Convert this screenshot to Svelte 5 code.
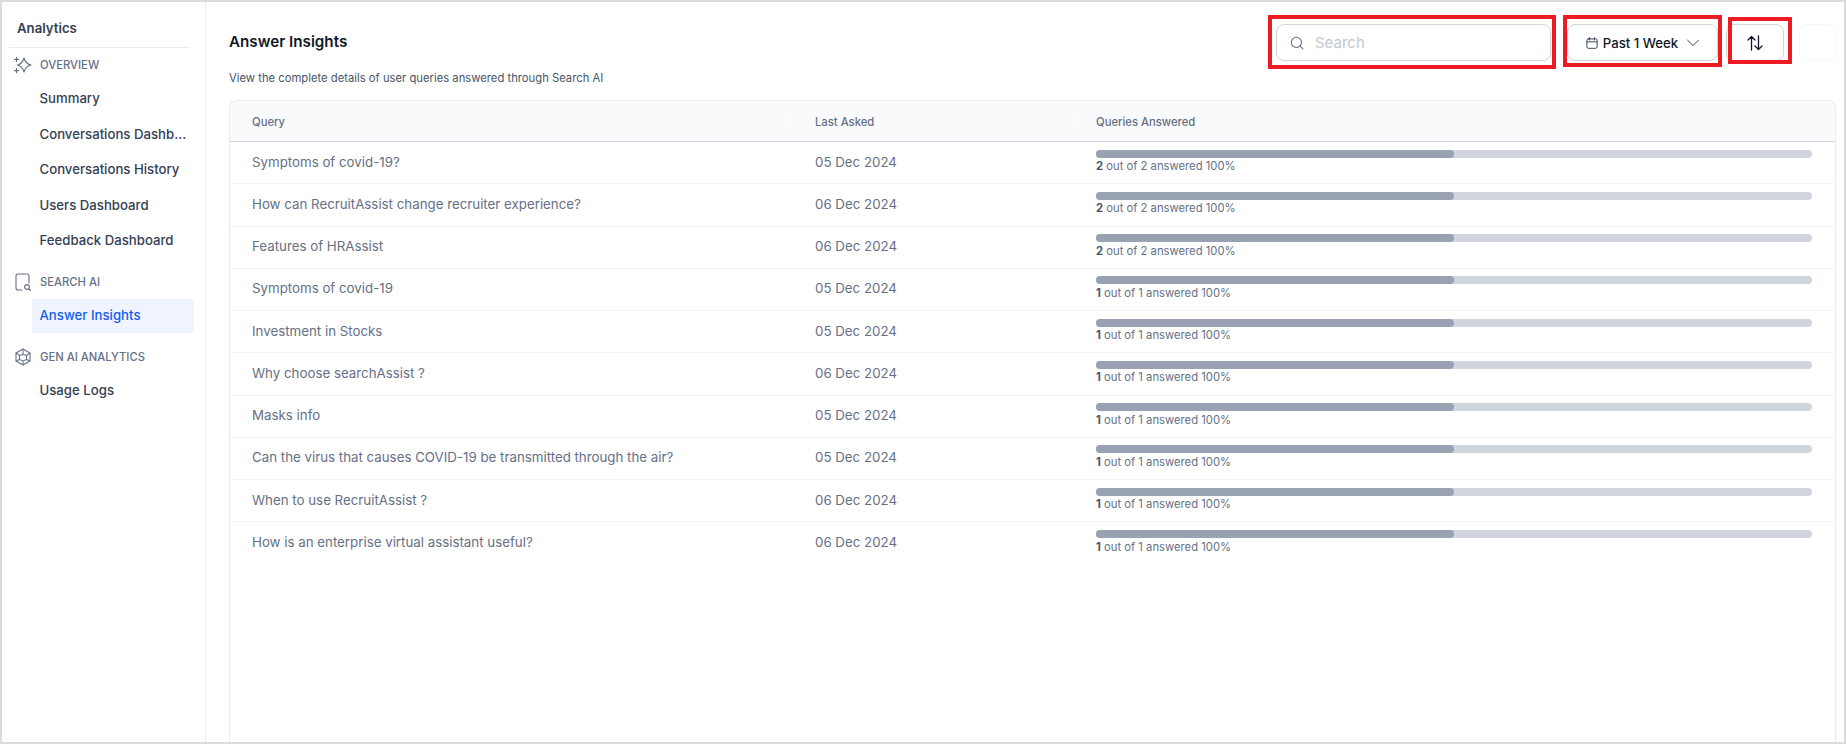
<script lang="ts">
  const rows = [
    { q: 'Symptoms of covid-19?', d: '05 Dec 2024', n: 2 },
    { q: 'How can RecruitAssist change recruiter experience?', d: '06 Dec 2024', n: 2 },
    { q: 'Features of HRAssist', d: '06 Dec 2024', n: 2 },
    { q: 'Symptoms of covid-19', d: '05 Dec 2024', n: 1 },
    { q: 'Investment in Stocks', d: '05 Dec 2024', n: 1 },
    { q: 'Why choose searchAssist ?', d: '06 Dec 2024', n: 1 },
    { q: 'Masks info', d: '05 Dec 2024', n: 1 },
    { q: 'Can the virus that causes COVID-19 be transmitted through the air?', d: '05 Dec 2024', n: 1 },
    { q: 'When to use RecruitAssist ?', d: '06 Dec 2024', n: 1 },
    { q: 'How is an enterprise virtual assistant useful?', d: '06 Dec 2024', n: 1 }
  ];
</script>

<div class="frame">
  <aside class="sidebar">
    <div class="side-title">Analytics</div>
    <div class="group first">
      <svg class="gicon" viewBox="0 0 18 18" width="18" height="18" fill="none" stroke="#667085" stroke-width="1.1">
        <path d="M10 2Q11.4 7.6 17 9Q11.4 10.4 10 16Q8.6 10.4 3.4 9Q8.6 7.6 10 2Z" stroke-linejoin="round"/>
        <path d="M2.5 1.2v4.4M0.4 3.4h4.2M2.5 12.4v4.4M0.4 14.6h4.2" stroke-linecap="round"/>
      </svg>
      <span>OVERVIEW</span>
    </div>
    <div class="item">Summary</div>
    <div class="item">Conversations Dashb...</div>
    <div class="item">Conversations History</div>
    <div class="item">Users Dashboard</div>
    <div class="item">Feedback Dashboard</div>
    <div class="group second">
      <svg class="gicon" viewBox="0 0 18 18" width="18" height="18" fill="none" stroke="#667085" stroke-width="1.1">
        <path d="M8 17H4a2 2 0 0 1-2-2V3a2 2 0 0 1 2-2h9a2 2 0 0 1 2 2v7" stroke-linecap="round"/>
        <circle cx="13" cy="14" r="2.4"/>
        <path d="M15 16l1.5 1.5" stroke-linecap="round"/>
      </svg>
      <span>SEARCH AI</span>
    </div>
    <div class="item active">Answer Insights</div>
    <div class="group third">
      <svg class="gicon" viewBox="0 0 18 18" width="18" height="18" fill="none" stroke="#667085" stroke-width="1.1">
        <path d="M9 1l7 4v8l-7 4-7-4V5z" stroke-linejoin="round"/>
        <path d="M9 1v5.5M2 5l3.5 2.5M16 5l-3.5 2.5M5.5 7.5L9 6.5l3.5 1v4L9 13l-3.5-1.5zM9 13v4M5.5 11.5L2 13M12.5 11.5L16 13"/>
      </svg>
      <span>GEN AI ANALYTICS</span>
    </div>
    <div class="item">Usage Logs</div>
  </aside>

  <main class="content">
    <div class="head">
      <div class="titles">
        <h1>Answer Insights</h1>
        <p>View the complete details of user queries answered through Search AI</p>
      </div>
      <div class="tools">
        <div class="search">
          <svg viewBox="0 0 16 16" width="14" height="14" fill="none" stroke="#667085" stroke-width="1.2" stroke-linecap="round">
            <circle cx="7.3" cy="7.3" r="5.8"/>
            <path d="M11.6 11.6L14.8 14.8"/>
          </svg>
          <span>Search</span>
        </div>
        <div class="btn date">
          <svg viewBox="0 0 14 14" width="12" height="12" fill="none" stroke="#344054" stroke-width="1.1" stroke-linecap="round">
            <rect x="1" y="2.2" width="12" height="11" rx="1.8"/>
            <path d="M1 5.6h12M4.2 0.8v2.6M9.8 0.8v2.6"/>
          </svg>
          <span>Past 1 Week</span>
          <svg class="chev" viewBox="0 0 12 12" width="12" height="12" fill="none" stroke="#344054" stroke-width="1" stroke-linecap="round" stroke-linejoin="round">
            <path d="M0.6 3.2L6 8.6L11.4 3.2"/>
          </svg>
        </div>
        <div class="btn sort">
          <svg viewBox="0 0 16 16" width="16" height="16" fill="none" stroke="#101828" stroke-width="1.3" stroke-linecap="round" stroke-linejoin="round">
            <path d="M4.5 15V1.5M1 5L4.5 1.5L8 5M11.5 1v13.5M8 11L11.5 14.5L15 11"/>
          </svg>
        </div>
        <div class="ghost"></div>
      </div>
    </div>

    <div class="table">
      <div class="row header">
        <div>Query</div>
        <div class="sep">Last Asked</div>
        <div class="sep">Queries Answered</div>
      </div>
      {#each rows as r}
        <div class="row">
          <div class="query">{r.q}</div>
          <div class="query">{r.d}</div>
          <div class="answered">
            <div class="track"><div class="fill"></div></div>
            <div class="note"><b>{r.n}</b> out of {r.n} answered 100%</div>
          </div>
        </div>
      {/each}
    </div>
  </main>

  <div class="mark m1"></div>
  <div class="mark m2"></div>
  <div class="mark m3"></div>
</div>

<style>
  :global(body) {
    margin: 0;
    background: #fff;
  }

  .frame {
    position: relative;
    box-sizing: border-box;
    width: 1846px;
    height: 744px;
    border: 2px solid #dcdcdc;
    display: flex;
    overflow: hidden;
    font-family: Inter, "Liberation Sans", sans-serif;
  }

  .sidebar {
    box-sizing: border-box;
    width: 204px;
    flex: none;
    border-right: 1px solid #eaecf0;
    padding: 0 7px;
  }

  .side-title {
    height: 46px;
    box-sizing: border-box;
    padding: 18px 0 0 8px;
    margin-right: 8px;
    font-size: 13.2px;
    line-height: 17px;
    font-weight: 600;
    color: #344054;
    border-bottom: 1px solid #eaecf0;
  }

  .group {
    display: flex;
    align-items: center;
    gap: 8px;
    height: 20px;
    padding-left: 5px;
    font-size: 11.25px;
    font-weight: 500;
    color: #667085;
  }

  .gicon {
    flex: none;
  }

  .first {
    margin-top: 7px;
    margin-bottom: 6px;
  }

  .second {
    margin-top: 13.5px;
    margin-bottom: 7px;
  }

  .third {
    margin-top: 14px;
    margin-bottom: 6px;
  }

  .item {
    box-sizing: border-box;
    height: 35.5px;
    line-height: 35.5px;
    margin-left: 23px;
    margin-right: 4px;
    padding-left: 7.5px;
    font-size: 13.2px;
    font-weight: 500;
    color: #344054;
    white-space: nowrap;
  }

  .active {
    height: 34px;
    line-height: 33px;
    background: #eff4ff;
    color: #155eef;
  }

  .content {
    flex: 1;
    min-width: 0;
    padding: 0 8px 0 23px;
  }

  .head {
    display: flex;
    justify-content: space-between;
    height: 98px;
  }

  h1 {
    margin: 31px 0 0;
    font-size: 15.2px;
    line-height: 17px;
    font-weight: 600;
    color: #101828;
  }

  .titles p {
    margin: 21px 0 0;
    font-size: 11.25px;
    line-height: 15px;
    color: #475467;
  }

  .tools {
    display: flex;
    align-items: flex-start;
    padding-top: 22px;
  }

  .search,
  .btn,
  .ghost {
    box-sizing: border-box;
    height: 37px;
    border: 1px solid #d0d5dd;
    border-radius: 8px;
    display: flex;
    align-items: center;
  }

  .search {
    width: 275px;
    padding-left: 13px;
    gap: 11px;
    margin-right: 16px;
    font-size: 15px;
    color: #c4c8d2;
  }

  .btn.date {
    width: 151px;
    margin-right: 8px;
    justify-content: center;
    font-size: 13.2px;
    font-weight: 500;
    color: #101828;
  }

  .date span {
    margin: 0 9px 0 5px;
  }

  .sort {
    width: 58px;
    justify-content: center;
  }

  .ghost {
    width: 37px;
    margin-left: 15px;
    border-color: #f6f7f9;
  }

  .table {
    border: 1px solid #eaecf0;
    border-bottom: 0;
    border-radius: 8px 8px 0 0;
    height: 650px;
    box-shadow: 0 0 2px rgba(16, 24, 40, 0.05);
  }

  .row {
    display: grid;
    grid-template-columns: 563px 281px 1fr;
    box-sizing: border-box;
    height: 42.25px;
    align-items: center;
    padding-left: 22px;
    padding-right: 23px;
    border-bottom: 1px solid #f2f4f7;
  }

  .row:last-child {
    border-bottom: 0;
  }

  .header {
    height: 41px;
    padding-top: 2px;
    background: #f9fafb;
    border-bottom: 1px solid #d0d5dd;
    border-radius: 8px 8px 0 0;
    font-size: 11.25px;
    font-weight: 500;
    color: #667085;
  }

  .sep {
    position: relative;
  }

  .sep::before {
    content: '';
    position: absolute;
    left: -24px;
    top: -3px;
    bottom: -3px;
    width: 1px;
    background: #fdfdfe;
  }

  .query {
    font-size: 13.3px;
    font-weight: 400;
    color: #667085;
    white-space: nowrap;
    padding-bottom: 2px;
  }

  .answered {
    padding-bottom: 1.5px;
  }

  .track {
    height: 8px;
    border-radius: 4px;
    background: #d0d5dd;
    overflow: hidden;
  }

  .fill {
    width: 50%;
    height: 100%;
    border-radius: 0 4px 4px 0;
    background: #98a2b3;
  }

  .note {
    margin-top: 1.5px;
    font-size: 11.25px;
    line-height: 15px;
    color: #667085;
  }

  .note b {
    font-weight: 700;
    color: #475467;
  }

  .mark {
    position: absolute;
    box-sizing: border-box;
    border: 4px solid #ed1c24;
    pointer-events: none;
  }

  .m1 {
    left: 1266px;
    top: 13px;
    width: 288px;
    height: 54px;
  }

  .m2 {
    left: 1561px;
    top: 13px;
    width: 159px;
    height: 52px;
  }

  .m3 {
    left: 1726px;
    top: 15px;
    width: 64px;
    height: 47px;
  }
</style>
